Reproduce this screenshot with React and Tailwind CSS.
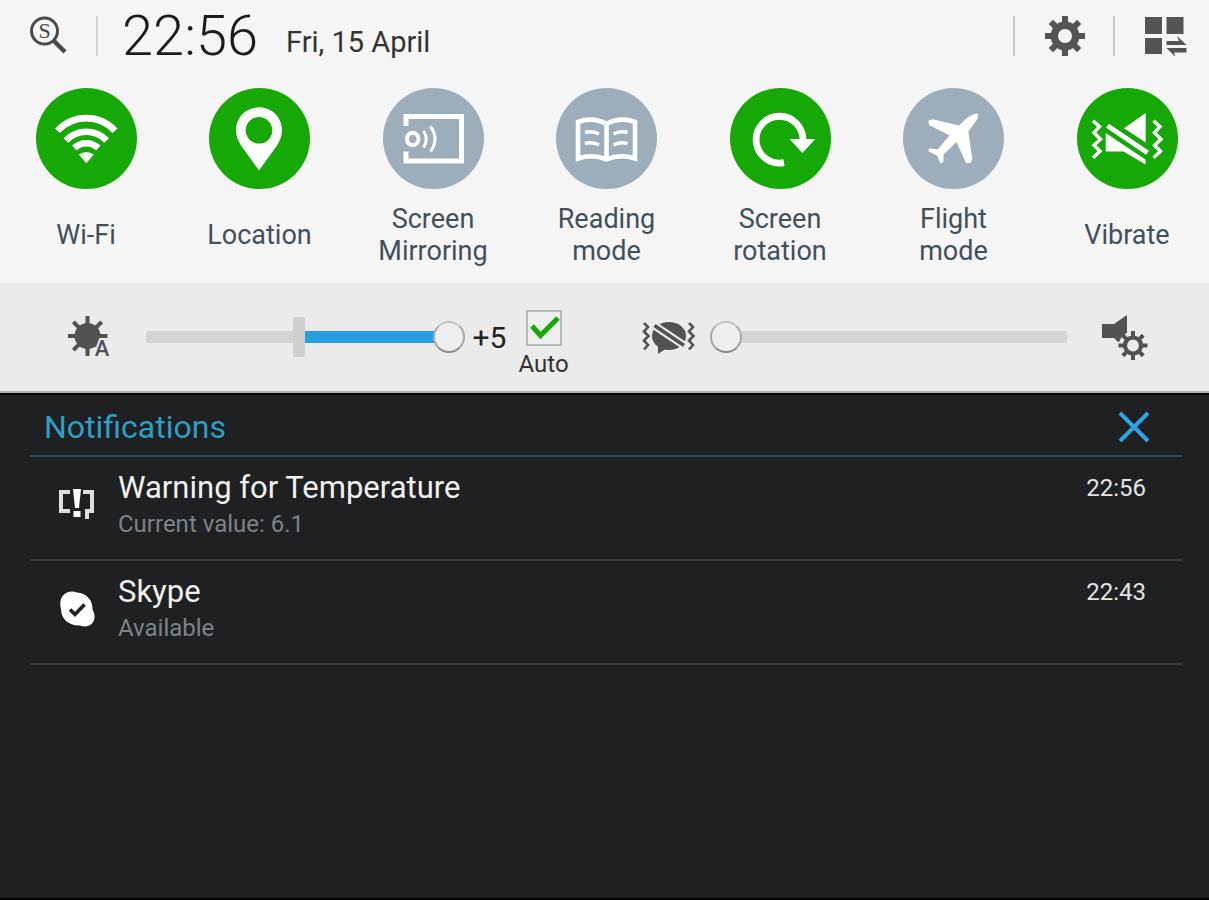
import React, { useState } from 'react';

const TEETH = [0, 45, 90, 135, 180, 225, 270, 315];

function SearchIcon() {
  return (
    <svg viewBox="0 0 40 40" className="size-10" fill="none" stroke="#4a4a4a">
      <circle cx="16.5" cy="15" r="13" strokeWidth="3" />
      <path d="M25.5 24.5 37 36" strokeWidth="4.5" />
      <text
        x="16.5"
        y="22"
        textAnchor="middle"
        fontSize="22"
        fontFamily="Liberation Serif, serif"
        fill="#4a4a4a"
        stroke="none"
      >
        S
      </text>
    </svg>
  );
}

function GearIcon() {
  return (
    <svg viewBox="-20 -20 40 40" className="size-10" fill="none" stroke="#545454">
      <circle r="10.7" strokeWidth="7.4" />
      {TEETH.map((deg) => (
        <path key={deg} d="M0 -12.5V-20" strokeWidth="6" transform={`rotate(${deg})`} />
      ))}
    </svg>
  );
}

function GridSwapIcon() {
  return (
    <svg viewBox="0 0 42 40" className="h-10 w-[42px]" fill="#545454">
      <path d="M0 1h17v17H0zM21.5 1h17v17h-17zM0 22h17v16H0z" />
      <path d="M21.5 25H34l-2-5 9.500 9h-20z" />
      <path d="M41.500 36.500H29l1.500 4.500-9-9h20z" />
    </svg>
  );
}

function WifiIcon() {
  return (
    <svg viewBox="0 0 101 101" fill="none" stroke="#fff" strokeWidth="6.6">
      <path d="M21.5 42.8A39 39 0 0 1 79.1 42.8" />
      <path d="M30 52.4A28 28 0 0 1 70.6 52.4" />
      <path d="M38.3 60A17.6 17.6 0 0 1 62.3 60" />
      <path d="M42.8 66.6Q50.3 61.6 57.8 66.6L50.3 75.2z" fill="#fff" stroke="none" />
    </svg>
  );
}

function PinIcon() {
  return (
    <svg viewBox="0 0 101 101" fill="#fff">
      <path
        fillRule="evenodd"
        d="M50 19.3C62.5 19.3 73 29 73 42C73 48 71 52.5 68 57.5L50 82.5L32 57.5C29 52.5 27 48 27 42C27 29 37.5 19.3 50 19.3zM50 29a13.3 13.3 0 1 0 0 26.6a13.3 13.3 0 1 0 0-26.6z"
      />
    </svg>
  );
}

function MirroringIcon() {
  return (
    <svg viewBox="0 0 101 101" fill="none" stroke="#fff">
      <path d="M23 38V28.5H78.5V73H23V63.6" strokeWidth="5" />
      <ellipse cx="29.7" cy="51" rx="5.8" ry="6.3" strokeWidth="4" />
      <path d="M40.5 43Q46 51 40.5 59.5" strokeWidth="3" />
      <path d="M47.5 38.5Q56.5 51 47.5 63.5" strokeWidth="3" />
    </svg>
  );
}

function BookIcon() {
  return (
    <svg viewBox="0 0 101 101" fill="none" stroke="#fff">
      <path
        d="M22 70.5V34Q37 28.5 50.5 36Q64 28.5 79 34V70.5Q64 65.5 50.5 71.5Q37 65.5 22 70.5zM50.5 36V71.5"
        strokeWidth="4.6"
      />
      <path
        d="M29 44.5Q36 42.5 43 46M29 55.5Q36 53.5 43 57M57.5 46Q64.5 42.5 71.5 44.5M57.5 57Q64.5 53.5 71.5 55.5"
        strokeWidth="3.6"
      />
    </svg>
  );
}

function RotationIcon() {
  return (
    <svg viewBox="0 0 101 101" fill="none" stroke="#fff">
      <path d="M72.9 53A23.4 23.4 0 1 0 54 74.6" strokeWidth="6.8" />
      <path d="M59.5 51H85.3L72.4 65z" fill="#fff" stroke="none" />
    </svg>
  );
}

function PlaneIcon() {
  return (
    <svg viewBox="0 0 101 101" fill="#fff">
      <path d="M74.5 25.5C71 25 66 28.5 62.5 31.3L56 37.5L29.5 31.2L25.4 32.5L26 37L46.5 47.5L34.6 61.5L26.5 60.3L25 63L34 67.5L37.3 75.3L40.5 74L40.5 66.5L53.5 54L63 75L67.5 75L69.3 71L65.3 43.5L72 34.5C74.5 31 76 28 74.5 25.5z" />
    </svg>
  );
}

function VibrateIcon() {
  return (
    <svg viewBox="0 0 101 101" fill="none" stroke="#fff">
      <path d="M16 32.7l6.5 6-5.5 6 6.5 6.5-6.5 6 6 6-7 6.500" strokeWidth="3.4" />
      <path d="M76.500 32.7l6.5 6-5.500 6 6.500 6.500-6.500 6 6 6-7 6.500" strokeWidth="3.4" />
      <path d="M47 40.3L68.7 25V54.5z" fill="#fff" stroke="none" />
      <path d="M28.7 45L68.5 71.5V76.5L46.5 63.5H28.7z" fill="#fff" stroke="none" />
      <path d="M30.5 37.8L70.5 64.8" strokeWidth="5" />
    </svg>
  );
}

function BrightnessIcon() {
  return (
    <svg viewBox="0 -7 46 56" className="h-14 w-[46px] shrink-0" fill="#525252">
      <circle cx="19.5" cy="20" r="13" />
      {TEETH.map((deg) => (
        <path
          key={deg}
          d="M19.5 9V0"
          stroke="#525252"
          strokeWidth="4"
          transform={`rotate(${deg} 19.5 20)`}
        />
      ))}
      <text
        x="34"
        y="40"
        textAnchor="middle"
        fontSize="22"
        fontWeight="500"
        fontFamily="Roboto, sans-serif"
        stroke="#ebebeb"
        strokeWidth="4"
        paintOrder="stroke"
      >
        A
      </text>
    </svg>
  );
}

function VibrateBubbleIcon() {
  return (
    <svg viewBox="0 0 54 36" className="h-9 w-[54px] shrink-0" fill="none" stroke="#525252">
      <path d="M2 4l4 4-4 4.5 4.5 4.5-4.5 4.5 4 4.5-4 4.5" strokeWidth="2.6" />
      <path d="M47 4l4 4-4 4.5 4.5 4.5-4.5 4.5 4 4.5-4 4.5" strokeWidth="2.6" />
      <ellipse cx="27" cy="17" rx="17" ry="14" fill="#525252" stroke="none" />
      <path d="M16 26V35L25 29z" fill="#525252" stroke="none" />
      <path d="M10 5L46 29" stroke="#ebebeb" strokeWidth="8" />
      <path d="M12.500 6.500L42 26.500" strokeWidth="3.600" />
    </svg>
  );
}

function SoundSettingsIcon() {
  return (
    <svg viewBox="0 0 48 48" className="size-12 shrink-0" fill="none" stroke="#525252">
      <path d="M1 11H13L26 2V27L17 29L13 25H1z" fill="#525252" stroke="none" />
      <circle cx="32" cy="32.5" r="14" fill="#ebebeb" stroke="none" />
      <circle cx="32" cy="32.5" r="8" strokeWidth="4.2" />
      {TEETH.map((deg) => (
        <path
          key={deg}
          d="M32 23.5V18"
          strokeWidth="4"
          transform={`rotate(${deg} 32 32.5)`}
        />
      ))}
    </svg>
  );
}

function WarningIcon() {
  return (
    <svg viewBox="0 0 38 34" className="w-[38px]" fill="none" stroke="#dedede">
      <path d="M12 4H3V23H12" strokeWidth="4" />
      <path d="M25 4H34V23H29V31" strokeWidth="4" />
      <path d="M15 1H23L21 20H17z" fill="#fff" stroke="none" />
      <path d="M15.500 23H22.500V29H15.500z" fill="#fff" stroke="none" />
    </svg>
  );
}

function SkypeIcon() {
  return (
    <svg viewBox="0 0 38 38" className="w-[38px]" fill="none">
      <path
        d="M9 2.500C13 1 16 1.500 19 2.500C28 3 35 10 34.500 19.500C37 24 37.500 29 34.500 33C31 37 26 37 22 35.500C11 36 3 29 3 19C1 12 3 5 9 2.500z"
        fill="#fff"
      />
      <path d="M12 19.500L17 24.500L26.500 14.500" stroke="#1f2022" strokeWidth="3.600" />
    </svg>
  );
}

const tiles = [
  { name: 'Wi-Fi', Icon: WifiIcon, on: true },
  { name: 'Location', Icon: PinIcon, on: true },
  { name: 'Screen Mirroring', Icon: MirroringIcon, on: false },
  { name: 'Reading mode', Icon: BookIcon, on: false },
  { name: 'Screen rotation', Icon: RotationIcon, on: true },
  { name: 'Flight mode', Icon: PlaneIcon, on: false },
  { name: 'Vibrate', Icon: VibrateIcon, on: true },
];

const notifications = [
  { title: 'Warning for Temperature', text: 'Current value: 6.1', time: '22:56', Icon: WarningIcon },
  { title: 'Skype', text: 'Available', time: '22:43', Icon: SkypeIcon },
];

const rangeClass =
  'relative block h-10 w-full cursor-pointer appearance-none bg-transparent focus:outline-none [&::-webkit-slider-thumb]:size-8 [&::-webkit-slider-thumb]:appearance-none [&::-webkit-slider-thumb]:rounded-full [&::-webkit-slider-thumb]:border-2 [&::-webkit-slider-thumb]:border-[#a8a8a8] [&::-webkit-slider-thumb]:border-t-[#c4c4c4] [&::-webkit-slider-thumb]:border-b-[#8a8a8a] [&::-webkit-slider-thumb]:bg-[#eeeeee]';

function Tile({ name, Icon, on, onToggle }) {
  return (
    <button
      type="button"
      aria-pressed={on}
      onClick={onToggle}
      className="flex w-[116px] cursor-pointer flex-col items-center"
    >
      <span className={`size-[101px] rounded-full ${on ? 'bg-[#16a806]' : 'bg-[#9caebb]'}`}>
        <Icon />
      </span>
      <span className="mt-3.5 flex h-16 items-center text-center text-[27px] leading-8 text-[#42505c]">
        {name}
      </span>
    </button>
  );
}

function App() {
  const [active, setActive] = useState(tiles.map((tile) => tile.on));
  const [brightness, setBrightness] = useState(5);
  const [volume, setVolume] = useState(0);
  const [auto, setAuto] = useState(true);
  const [items, setItems] = useState(notifications);

  const toggle = (index) => {
    setActive((prev) => prev.map((on, i) => (i === index ? !on : on)));
  };

  return (
    <div className="flex min-h-screen flex-col border-b-2 border-black bg-[#1f2022] font-['Roboto',sans-serif]">
      <div className="bg-[#f5f5f5] pb-4">
        <header className="flex h-[72px] items-center pr-[22px] pl-7">
          <button type="button" aria-label="Search" className="cursor-pointer">
            <SearchIcon />
          </button>
          <span className="ml-7 h-10 w-[2px] bg-[#d2d2d2]" />
          <div className="ml-6 flex items-center gap-7">
            <time className="text-[56px] leading-[72px] font-light text-[#1c1c1c]">22:56</time>
            <span className="pt-3 text-[29px] leading-9 text-[#333333]">Fri, 15 April</span>
          </div>
          <span className="ml-auto h-10 w-[2px] bg-[#c8c8c8]" />
          <button type="button" aria-label="Settings" className="ml-[30px] cursor-pointer">
            <GearIcon />
          </button>
          <span className="ml-7 h-10 w-[2px] bg-[#c8c8c8]" />
          <button type="button" aria-label="Edit quick settings" className="ml-[30px] cursor-pointer">
            <GridSwapIcon />
          </button>
        </header>

        <div className="flex justify-between pt-4 pr-6 pl-7">
          {tiles.map((tile, index) => (
            <Tile key={tile.name} {...tile} on={active[index]} onToggle={() => toggle(index)} />
          ))}
        </div>
      </div>

      <div className="flex h-[110px] items-center border-b-2 border-[#b4b4b4] bg-[#ebebeb] pr-[60px] pl-[68px]">
        <BrightnessIcon />
        <div className="relative ml-8 flex-[319]">
          <span className="absolute top-3.5 right-3 left-0 h-3 rounded-xs bg-[#d4d4d4]" />
          <span
            className="absolute top-3.5 left-1/2 h-3 bg-[#269fe0]"
            style={{ width: `${Math.max(brightness, 0) * 9}%` }}
          />
          <span className="absolute top-0 right-1/2 h-10 w-3 rounded-xs bg-[#cfcfcf]" />
          <input
            type="range"
            aria-label="Brightness"
            min="-5"
            max="5"
            value={brightness}
            onChange={(e) => setBrightness(Number(e.target.value))}
            className={rangeClass}
          />
        </div>
        <span className="ml-2 w-9 text-[30px] text-[#222222]">
          {brightness > 0 ? `+${brightness}` : brightness}
        </span>
        <label className="ml-2.5 flex cursor-pointer flex-col items-center pt-3.5 text-2xl leading-7 text-[#333333]">
          <span className="relative mb-1 size-9">
            <input
              type="checkbox"
              checked={auto}
              onChange={(e) => setAuto(e.target.checked)}
              className="peer block size-9 cursor-pointer appearance-none border-2 border-[#b3bbbf] bg-[#eeeeee]"
            />
            <svg
              viewBox="0 0 36 36"
              className="pointer-events-none absolute inset-0 hidden peer-checked:block"
              fill="none"
              stroke="#16a806"
              strokeWidth="5"
            >
              <path d="M6 16L14.500 25.500L32 8" />
            </svg>
          </span>
          Auto
        </label>
        <span className="ml-[73px]">
          <VibrateBubbleIcon />
        </span>
        <div className="relative ml-3.5 flex-[358]">
          <span className="absolute inset-x-0 top-3.5 ml-4 h-3 rounded-xs bg-[#d4d4d4]" />
          <input
            type="range"
            aria-label="Volume"
            min="0"
            max="15"
            value={volume}
            onChange={(e) => setVolume(Number(e.target.value))}
            className={rangeClass}
          />
        </div>
        <button type="button" aria-label="Sound settings" className="ml-[34px] cursor-pointer">
          <SoundSettingsIcon />
        </button>
      </div>

      <main className="border-t-2 border-black pr-[27px] pl-[30px]">
        <div className="flex h-[62px] items-center justify-between border-b-2 border-[#25505c] pt-1 pr-8 pl-3.5">
          <h1 className="text-[32px] leading-10 text-[#2e9ec4]">Notifications</h1>
          <button
            type="button"
            aria-label="Clear notifications"
            onClick={() => setItems([])}
            className="cursor-pointer"
          >
            <svg viewBox="0 0 32 32" className="size-8" stroke="#2fa3e6" strokeWidth="4">
              <path d="M2 2L30 30M30 2L2 30" />
            </svg>
          </button>
        </div>
        <ul>
          {items.map(({ title, text, time, Icon }) => (
            <li key={title} className="flex border-b-2 border-[#3a3c3e] pt-3 pr-9 pb-[18px] pl-7">
              <span className="flex w-[60px] items-center">
                <Icon />
              </span>
              <div className="flex-1">
                <h2 className="text-[31px] leading-[38px] text-[#f0f0f0]">{title}</h2>
                <p className="text-2xl leading-[34px] text-[#7b8488]">{text}</p>
              </div>
              <time className="text-2xl leading-[38px] text-[#e4e4e4]">{time}</time>
            </li>
          ))}
        </ul>
      </main>
    </div>
  );
}

export default App;
